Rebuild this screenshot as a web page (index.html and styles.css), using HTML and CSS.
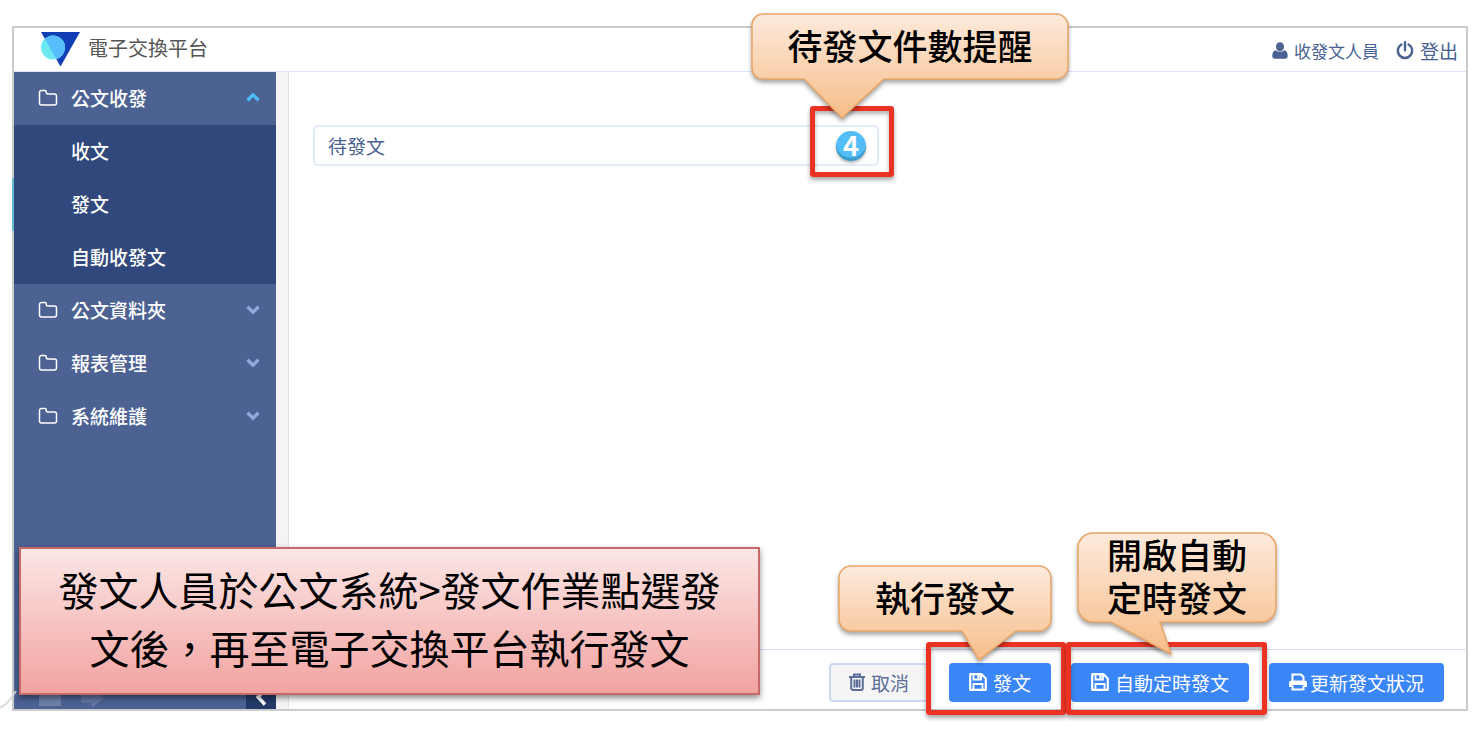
FILE: index.html
```html
<!DOCTYPE html>
<html lang="zh-TW">
<head>
    <meta charset="UTF-8">
    <meta name="viewport" content="width=device-width, initial-scale=1.0">
    <title>電子交換平台</title>
    <link rel="stylesheet" href="styles.css">
</head>
<body>
    <!-- shared icons -->
    <svg class="defs" width="0" height="0" aria-hidden="true">
        <defs>
            <linearGradient id="peach" x1="0" y1="0" x2="0" y2="1">
                <stop offset="0" stop-color="#fdeadc"/>
                <stop offset="1" stop-color="#f6bd88"/>
            </linearGradient>
            <clipPath id="triangle"><path d="M0 0h39L19.500 34.500z"/></clipPath>
            <symbol id="folder" viewBox="0 0 20 18">
                <path d="M1.500 3.500a2 2 0 0 1 2-2h3.200a1.600 1.600 0 0 1 1.600 1.600v.6a1.200 1.200 0 0 0 1.200 1.200h7a2 2 0 0 1 2 2v7.100a2 2 0 0 1-2 2h-13a2 2 0 0 1-2-2z" fill="none" stroke="currentColor" stroke-width="1.500"/>
            </symbol>
            <symbol id="chevron" viewBox="0 0 14 10">
                <path d="M2 2.500l5 5 5-5" fill="none" stroke="currentColor" stroke-width="3"/>
            </symbol>
            <symbol id="save" viewBox="0 0 18 18">
                <path d="M1.200 1.200h11.300l4.300 4.300v11.300H1.200z" fill="none" stroke="currentColor" stroke-width="2.200" stroke-linejoin="round"/>
                <path d="M4.500 1.500v5h7.500v-5M4.500 16.500v-5.500h9v5.500" fill="none" stroke="currentColor" stroke-width="1.800"/>
                <path d="M8.300 2h2.400v3.500H8.300z" fill="currentColor"/>
            </symbol>
        </defs>
    </svg>

    <div class="window">
        <header class="header">
            <svg class="logo" viewBox="0 0 39 35" width="39" height="35" aria-hidden="true">
                <path d="M0 0h39L19.500 34.500z" fill="#123eb5"/>
                <circle cx="12" cy="15.500" r="12" fill="#6be8f2"/>
                <circle cx="12" cy="15.500" r="12" fill="#58bdfb" clip-path="url(#triangle)"/>
            </svg>
            <h1 class="title">電子交換平台</h1>
            <div class="user">
                <svg viewBox="0 0 16 17" width="16" height="17" aria-hidden="true">
                    <ellipse cx="8" cy="4.800" rx="4" ry="4.600" fill="currentColor"/>
                    <path d="M4 8.200C1.300 8.500.3 10.500.3 14c0 1.800 1 2.700 2.500 2.700h10.400c1.500 0 2.500-.9 2.500-2.700 0-3.500-1-5.500-3.700-5.800-2.300 2.300-5.700 2.300-8 0z" fill="currentColor"/>
                </svg>
                <span>收發文人員</span>
            </div>
            <a class="logout" href="#">
                <svg viewBox="0 0 18 19" width="18" height="19" aria-hidden="true">
                    <path d="M5.400 3.500a7.200 7.200 0 1 0 7.200 0M9 1.200v8" fill="none" stroke="currentColor" stroke-width="2.400" stroke-linecap="round"/>
                </svg>
                <span>登出</span>
            </a>
        </header>

        <div class="main">
            <nav class="sidebar">
                <a class="menu open" href="#"><svg class="folder"><use href="#folder"/></svg>公文收發<svg class="chevron"><use href="#chevron"/></svg></a>
                <div class="submenu">
                    <a href="#">收文</a>
                    <a href="#" class="active">發文</a>
                    <a href="#">自動收發文</a>
                </div>
                <a class="menu" href="#"><svg class="folder"><use href="#folder"/></svg>公文資料夾<svg class="chevron"><use href="#chevron"/></svg></a>
                <a class="menu" href="#"><svg class="folder"><use href="#folder"/></svg>報表管理<svg class="chevron"><use href="#chevron"/></svg></a>
                <a class="menu" href="#"><svg class="folder"><use href="#folder"/></svg>系統維護<svg class="chevron"><use href="#chevron"/></svg></a>
                <button class="collapse" type="button" aria-label="收合選單">
                    <svg viewBox="0 0 12 18" width="12" height="18"><path d="M10 1.500L3 9l7 7.500" fill="none" stroke="currentColor" stroke-width="3.500"/></svg>
                </button>
            </nav>

            <section class="content">
                <div class="body">
                    <div class="pending">
                        <span>待發文</span>
                        <span class="badge">4</span>
                        <div class="mark mark-count"></div>
                        <div class="callout callout-count">
                            <svg viewBox="0 0 318 108" width="318" height="108" aria-hidden="true"><path d="M12 1H305a12 12 0 0 1 12 12V54a12 12 0 0 1-12 12H133L91 105 53 66H12A11 11 0 0 1 1 55V12A11 11 0 0 1 12 1z"/></svg>
                            <p>待發文件數提醒</p>
                        </div>
                    </div>
                </div>
                <footer class="actions">
                    <button class="btn cancel" type="button">
                        <svg viewBox="0 0 16 18" width="16" height="18" aria-hidden="true"><path d="M0 4h16M5 4V1.500h6V4M2.200 4.500v10.500a2 2 0 0 0 2 2h7.600a2 2 0 0 0 2-2V4.500M5.500 6.500v8M8 6.500v8M10.500 6.500v8" fill="none" stroke="currentColor" stroke-width="2"/></svg>
                        取消
                    </button>
                    <div class="step">
                        <button class="btn" type="button"><svg width="18" height="18"><use href="#save"/></svg>發文</button>
                        <div class="mark mark-send"></div>
                        <div class="callout callout-send">
                            <svg viewBox="0 0 214 97" width="214" height="97" aria-hidden="true"><path d="M13 1H201a12 12 0 0 1 12 12V54a12 12 0 0 1-12 12H178L141 95 124 66H13A12 12 0 0 1 1 54V13A12 12 0 0 1 13 1z"/></svg>
                            <p>執行發文</p>
                        </div>
                    </div>
                    <div class="step">
                        <button class="btn" type="button"><svg width="18" height="18"><use href="#save"/></svg>自動定時發文</button>
                        <div class="mark mark-auto"></div>
                        <div class="callout callout-auto">
                            <svg viewBox="0 0 200 124" width="200" height="124" aria-hidden="true"><path d="M16 1H184a15 15 0 0 1 15 15V75a15 15 0 0 1-15 15H83L94 122 34 90H16A15 15 0 0 1 1 75V16A15 15 0 0 1 16 1z"/></svg>
                            <p>開啟自動<br>定時發文</p>
                        </div>
                    </div>
                    <button class="btn print" type="button">
                        <svg viewBox="0 0 18 18" width="18" height="18" aria-hidden="true">
                            <path d="M3.500 8V1.500h8.500L14.500 4v4M3.500 12.500v4h11v-4" fill="none" stroke="currentColor" stroke-width="2"/>
                            <path d="M2.500 7.500h13A2.500 2.500 0 0 1 18 10v4h-3v-2H3v2H0v-4a2.500 2.500 0 0 1 2.500-2.500z" fill="currentColor"/>
                        </svg>更新發文狀況
                    </button>
                </footer>
            </section>
        </div>
    </div>

    <!-- slide show controls -->
    <svg class="slide-controls" viewBox="0 0 104 24" width="104" height="24" aria-hidden="true">
        <path d="M-2 23C4 22 8 18 16 6" fill="none" stroke="#d8d8d8" stroke-width="2"/>
        <rect x="39" y="5" width="22" height="16" fill="#91a0bd" opacity=".5"/>
        <path d="M82 9h10V4l11 9-11 9v-5H82z" fill="#8291b3" stroke="#8e9cba" opacity=".4"/>
    </svg>
    <div class="note">發文人員於公文系統&gt;發文作業點選發文後，再至電子交換平台執行發文</div>
</body>
</html>
```
FILE: styles.css
```css
* {
    box-sizing: border-box;
}

body {
    margin: 0;
    padding: 26px 12px 27px;
    min-height: 100vh;
    display: flex;
    position: relative;
    background: #fff;
    font-family: "Noto Sans CJK TC", "Noto Sans", sans-serif;
    font-size: 19px;
    color: #4a6292;
}

a {
    color: inherit;
    text-decoration: none;
}

svg {
    display: block;
    flex: none;
}

.defs {
    position: absolute;
}

.window {
    flex: 1;
    display: flex;
    flex-direction: column;
    border: 2px solid #cbcbcb;
}

/* Header */
.header {
    height: 44px;
    display: flex;
    align-items: center;
    padding: 0 8px 0 27px;
    border-bottom: 1px solid #dce5f6;
}

.title {
    margin: 0 auto 0 8px;
    font-size: 20px;
    font-weight: 400;
    line-height: 40px;
    padding-bottom: 3px;
    color: #555;
}

.user,
.logout {
    display: flex;
    align-items: center;
    gap: 6px;
    padding-top: 2px;
    line-height: 24px;
}

.user {
    font-size: 17px;
    margin-right: 17px;
}

.main {
    flex: 1;
    display: flex;
}

/* Sidebar */
.sidebar {
    width: 262px;
    flex: none;
    display: flex;
    flex-direction: column;
    background: #4c6293;
    color: #fff;
    font-weight: 500;
}

.menu {
    height: 53px;
    display: flex;
    align-items: center;
    padding: 0 15px 2px 24px;
}

.folder {
    width: 20px;
    height: 18px;
    margin-right: 13px;
}

.chevron {
    width: 16px;
    height: 11px;
    margin-left: auto;
    color: #93a9dc;
}

.open .chevron {
    color: #4cbcf8;
    transform: rotate(180deg);
}

.submenu {
    background: #30487b;
}

.submenu a {
    display: block;
    height: 53px;
    line-height: 51px;
    padding-left: 57px;
}

.submenu .active {
    box-shadow: -2px 0 #62bcd2;
}

.collapse {
    width: 30px;
    height: 24px;
    margin-top: auto;
    align-self: flex-end;
    display: flex;
    align-items: center;
    justify-content: center;
    padding: 0;
    border: 0;
    background: #233a69;
    color: #fff;
}

/* Content */
.content {
    flex: 1;
    display: flex;
    flex-direction: column;
    border-left: 12px solid #f4f4f4;
    box-shadow: inset 1px 0 #e2e2e2;
}

.body {
    flex: 1;
    padding: 53px 21px 53px 25px;
}

.pending {
    position: relative;
    width: 50%;
    height: 41px;
    display: flex;
    align-items: center;
    justify-content: space-between;
    padding: 0 11px 0 13px;
    border: 2px solid #e4ebf9;
    border-radius: 5px;
}

.badge {
    width: 30px;
    height: 30px;
    border-radius: 50%;
    background: #52bdf7;
    box-shadow: inset 0 -3px #3a9cca, 0 2px 3px rgba(0, 0, 0, 0.3);
    color: #fff;
    font-size: 27px;
    font-weight: 700;
    line-height: 28px;
    text-align: center;
}

.actions {
    height: 60px;
    display: flex;
    align-items: center;
    justify-content: flex-end;
    gap: 20px;
    padding: 5px 22px 0;
    border-top: 1px solid #d5dff3;
}

.btn {
    height: 39px;
    display: flex;
    align-items: center;
    gap: 6px;
    padding: 0 20px;
    border: 0;
    border-radius: 4px;
    background: #3a86f7;
    color: #fff;
    font: inherit;
}

.cancel {
    border: 2px solid #ccd8f0;
    padding: 0 18px;
    background: #f5f5f5;
    color: #5b6e9a;
}

.print {
    gap: 3px;
}

.step {
    position: relative;
}

/* Red frames and callouts */
.mark {
    position: absolute;
    border: 5px solid #ec3323;
    border-radius: 3px;
    box-shadow: 0 3px 4px rgba(0, 0, 0, 0.35), inset 0 3px 4px rgba(0, 0, 0, 0.3);
}

.mark-count {
    width: 84px;
    top: -21px;
    bottom: -13px;
    right: -17px;
}

.mark-send {
    inset: -21px -15px -13px -23px;
}

.mark-auto {
    inset: -21px -18px -13px -5px;
}

.callout {
    position: absolute;
    z-index: 2;
    color: #000;
    font-size: 35px;
    font-weight: 500;
    line-height: 43px;
    text-align: center;
    white-space: nowrap;
}

.callout svg {
    fill: url(#peach);
    stroke: #eaa566;
    stroke-width: 1.5;
    filter: drop-shadow(0 3px 2px rgba(0, 0, 0, 0.35));
}

.callout p {
    position: absolute;
    inset: 0;
    margin: 0;
    padding-top: 10px;
}

.callout-count {
    right: -192px;
    bottom: 43px;
}

.callout-send {
    right: -1px;
    bottom: 40px;
}

.callout-auto {
    left: 6px;
    bottom: 46px;
}

.callout-auto p {
    padding-top: 0;
}

.note {
    position: absolute;
    left: 19px;
    bottom: 43px;
    width: 741px;
    padding: 11px 30px 17px;
    border: 2px solid #c56a68;
    background: linear-gradient(#fbe6e5, #f2a3a1);
    box-shadow: 0 3px 6px rgba(0, 0, 0, 0.45);
    color: #000;
    font-size: 40px;
    line-height: 58px;
    text-align: center;
}

.slide-controls {
    position: absolute;
    left: 0;
    bottom: 29px;
}
```
